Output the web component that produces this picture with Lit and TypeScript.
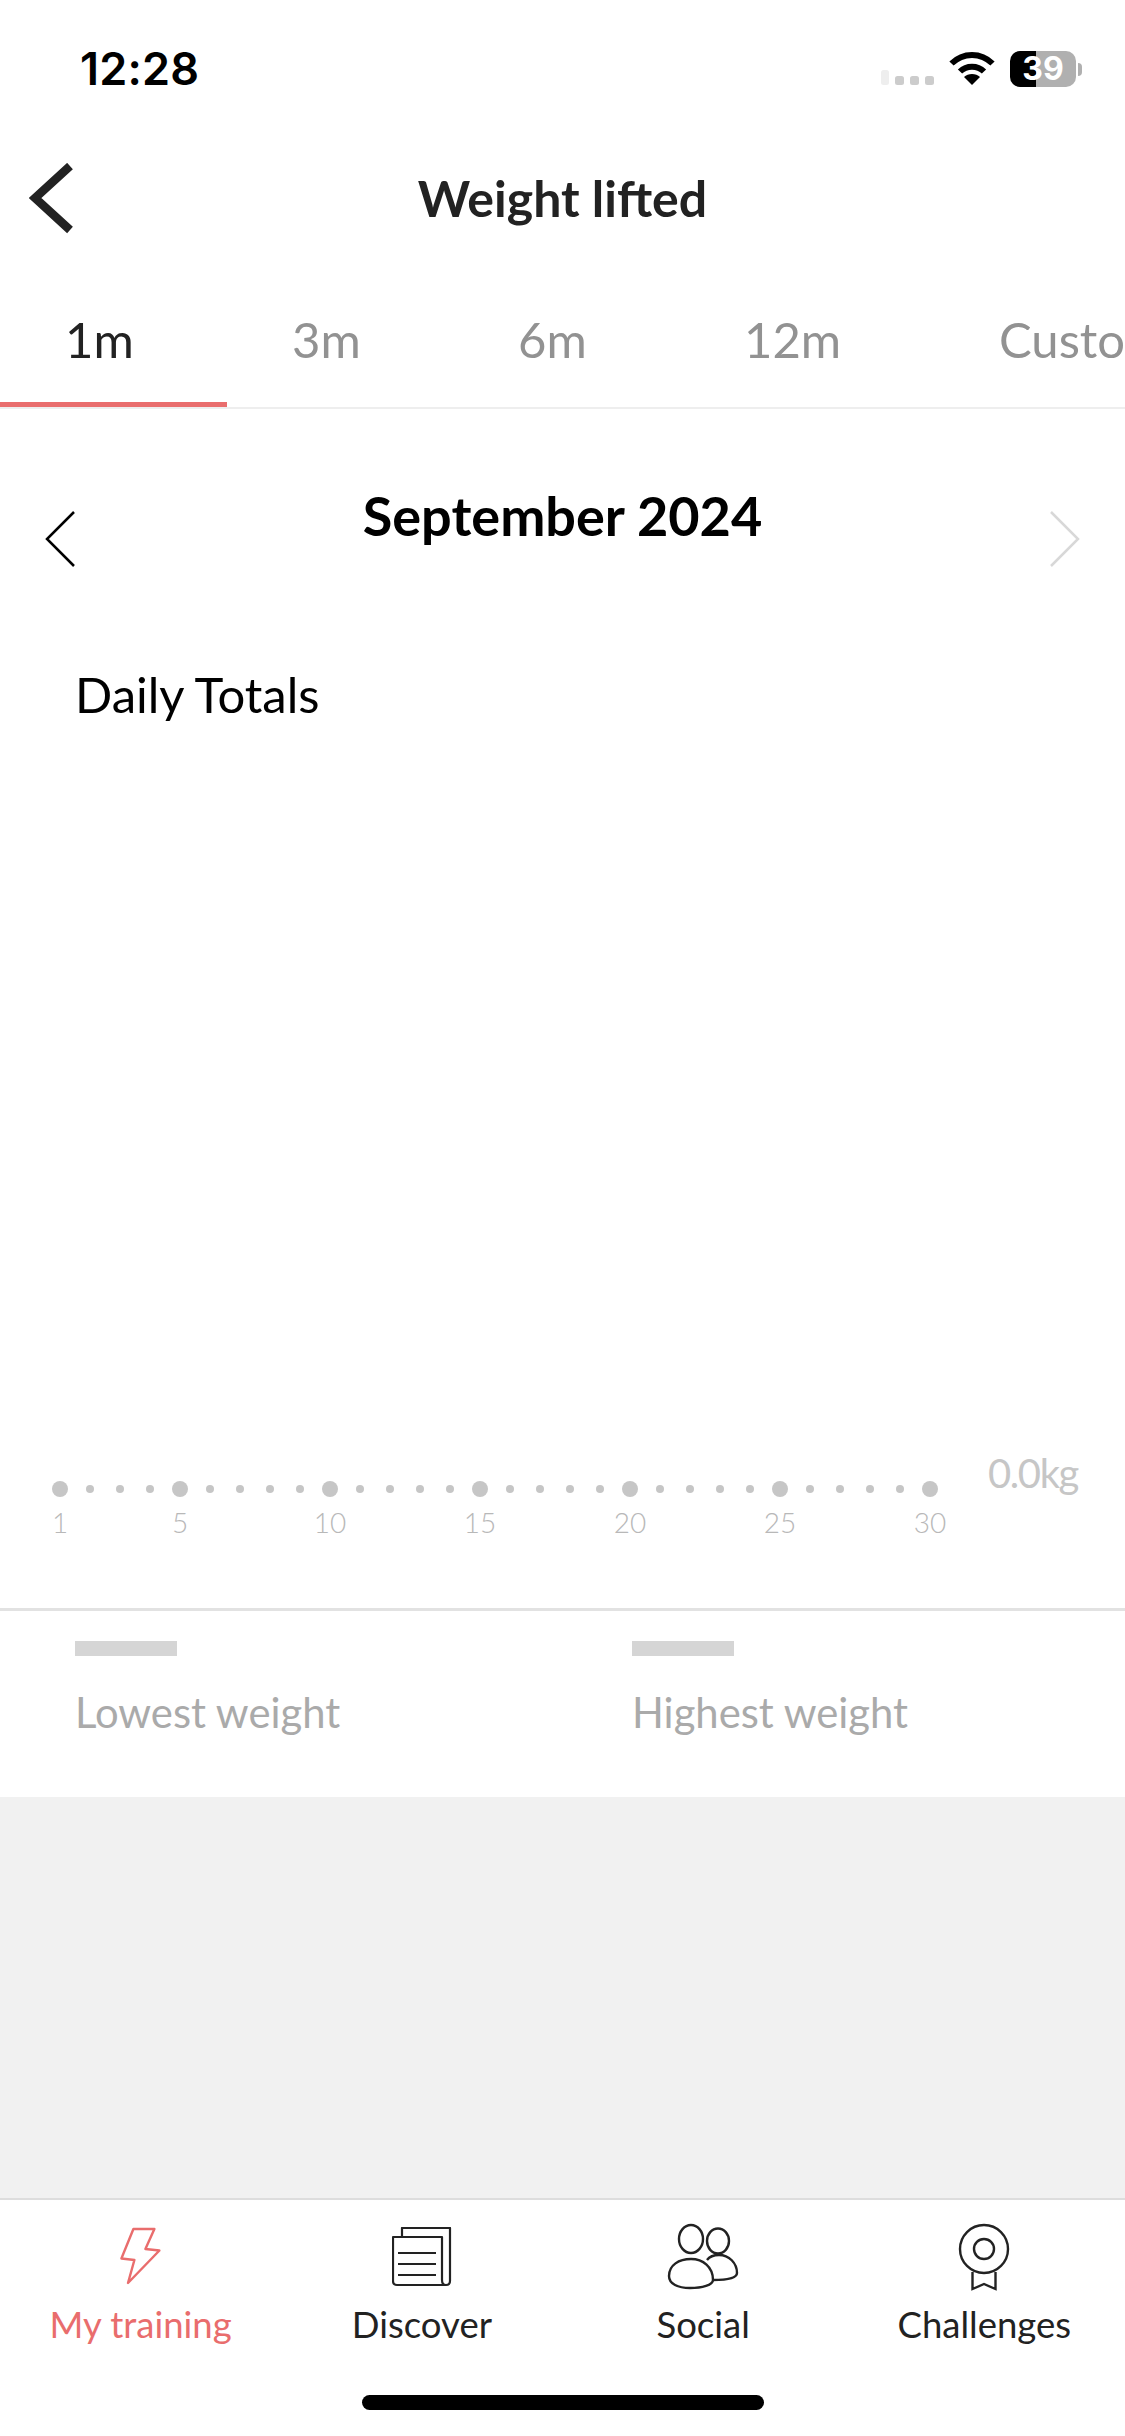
import { LitElement, html, css, svg } from "lit";
import { customElement } from "lit/decorators.js";

const TABS = [
  { label: "1m", width: 227, active: true },
  { label: "3m", width: 226 },
  { label: "6m", width: 226 },
  { label: "12m", width: 229 },
  { label: "Custom", width: 340, last: true },
];

const NAV = [
  { label: "My training", active: true, icon: svg`<svg width="60" height="60" viewBox="0 0 60 60" fill="none" stroke="currentColor" stroke-width="2.4" stroke-linejoin="round"><path d="M22.400 2H43.400L34.400 22L48.400 23.500L17 56L23.400 33L10.400 31.500Z"/></svg>` },
  { label: "Discover", icon: svg`<svg width="60" height="60" viewBox="0 0 60 60" fill="none" stroke="#222" stroke-width="2.200" stroke-linejoin="round"><path d="M10 9V1H58V54Q58 58 54 58H5Q1 58 1 54V10H50V53Q50 58 54 58"/><path d="M6 26H44M6 37H44M6 48H44"/></svg>` },
  { label: "Social", icon: svg`<svg width="74" height="68" viewBox="0 0 74 68" fill="none" stroke="#222" stroke-width="2.400"><ellipse cx="25" cy="16" rx="12" ry="14"/><ellipse cx="52" cy="18" rx="11" ry="12.500"/><path d="M3 53C3 42 13 36 25 36C37 36 47 44 47 57C47 62 36 65 24 65C12 65 3 61 3 53Z"/><path d="M41 37C44 33 48 32 53 32C63 32 71 40 71 50C71 55 61 57 47 57"/></svg>` },
  { label: "Challenges", icon: svg`<svg width="56" height="70" viewBox="0 0 56 70" fill="none" stroke="#222" stroke-width="2.400"><circle cx="28" cy="27" r="24"/><circle cx="28" cy="27" r="10"/><path d="M16.500 50V67L28 62L39.500 67V50"/></svg>` },
];

const days = Array.from({ length: 30 }, (_, i) => i + 1);
const isMajor = (d: number) => d === 1 || d % 5 === 0;

@customElement("app-root")
export class AppRoot extends LitElement {
  static styles = css`
    :host { display: block; width: 1125px; height: 2436px; background: #fff; font-family: Lato, "Liberation Sans", sans-serif; overflow: hidden; }
    .page { display: flex; flex-direction: column; height: 2436px; }
    .status { height: 130px; flex: none; display: flex; padding: 46px 43px 0 80px; box-sizing: border-box; justify-content: space-between; align-items: flex-start; }
    .time { font: 600 45px/46px Inter, "Liberation Sans", sans-serif; color: #000; letter-spacing: 0.2px; }
    .status-icons { display: flex; align-items: flex-start; margin-top: 5px; }
    .cell { display: flex; align-items: flex-end; gap: 6px; height: 34px; margin-right: 15px; }
    .cell i { display: block; width: 9px; height: 9px; border-radius: 2.500px; background: #ccc; }
    .cell i:first-child { height: 15px; width: 8px; background: #eee; }
    .wifi { margin-right: 15px; display: block; }
    .battery { position: relative; width: 66px; height: 36px; border-radius: 10px; background: linear-gradient(90deg, #000 0 26px, #b0b0b0 26px); color: #fff; font: 700 32px/36px Inter, "Liberation Sans", sans-serif; text-align: center; }
    .cap { width: 4px; height: 13px; margin: 12px 0 0 2px; background: #b0b0b0; border-radius: 0 4px 4px 0; }
    .nav { height: 132px; flex: none; position: relative; display: flex; align-items: center; justify-content: center; }
    .title { font-size: 50px; font-weight: 700; color: #222; line-height: 58px; margin-top: 3px; }
    .back { position: absolute; left: 29px; top: 33px; display: block; }
    .tabs { height: 147px; flex: none; box-sizing: border-box; border-bottom: 2px solid #eee; display: flex; overflow: hidden; }
    .tab { flex: none; box-sizing: border-box; height: 145px; font-size: 49px; line-height: 56px; padding: 49px 0 0 65px; color: #929292; white-space: nowrap; }
    .tab.active { color: #222; border-bottom: 5px solid #e96d6d; }
    .tab.last { padding-left: 91px; }
    .month { height: 253px; flex: none; position: relative; display: flex; justify-content: space-between; align-items: flex-start; padding: 101px 44px 0 44px; box-sizing: border-box; }
    .month-name { position: absolute; left: 0; right: 0; top: 72px; text-align: center; font-size: 54px; font-weight: 700; line-height: 70px; color: #000; }
    .daily { flex: none; padding-left: 75px; font-size: 49px; line-height: 64px; height: 64px; color: #000; }
    .chart-space { height: 731px; flex: none; }
    .chart-row { flex: none; display: flex; align-items: flex-start; padding-left: 45px; height: 151px; box-sizing: border-box; }
    .axis { display: grid; grid-template-columns: repeat(30, 30px); margin-top: 24px; }
    .day { display: flex; flex-direction: column; align-items: center; }
    .dot-box { height: 16px; display: flex; align-items: center; justify-content: center; margin-bottom: 13px; }
    .dot { width: 8px; height: 8px; border-radius: 50%; background: #c6c6c6; }
    .dot.major { width: 16px; height: 16px; }
    .tick { width: 60px; flex: none; margin: 0 -15px; height: 24px; text-align: center; font-size: 28px; line-height: 24px; font-weight: 300; color: #b8b8b8; }
    .kg { margin-left: 43px; font-size: 40px; line-height: 40px; font-weight: 400; color: #c6c6c6; margin-top: -4px; letter-spacing: -1.400px; }
    .rule { height: 3px; flex: none; background: #e2e2e2; }
    .stats { flex: none; height: 186px; display: grid; grid-template-columns: 557px 1fr; padding: 30px 0 0 75px; box-sizing: border-box; }
    .placeholder { width: 102px; height: 15px; background: #d5d5d5; }
    .stat-label { margin-top: 27px; font-size: 41.800px; line-height: 58px; font-weight: 400; color: #aaa; }
    .fill { flex: 1; background: #f1f1f1; }
    .tabbar { flex: none; height: 238px; border-top: 2px solid #ddd; background: #fff; box-sizing: border-box; display: flex; flex-direction: column; }
    .items { display: grid; grid-template-columns: repeat(4, 1fr); height: 195px; }
    .item { display: flex; flex-direction: column; align-items: center; color: #222; font-size: 36.500px; }
    .item.active { color: #e96d6d; }
    .icon { height: 72px; margin-top: 21px; display: flex; align-items: center; justify-content: center; }
    .item-label { margin-top: 8px; line-height: 46px; }
    .home { width: 402px; height: 15px; border-radius: 8px; background: #000; align-self: center; }
  `;

  render() {
    return html`<div class="page">
      <div class="status">
        <span class="time">12:28</span>
        <div class="status-icons">
          <div class="cell"><i></i><i></i><i></i><i></i></div>
          <svg class="wifi" width="46" height="34" viewBox="0 0 46 34" fill="none" stroke="#000" stroke-width="6"><path d="M2.500 12.500C14 1 32 1 43.500 12.500"/><path d="M11 20.500C17.500 14 28.500 14 35 20.500"/><path d="M23 34L15 26C19 22 27 22 31 26Z" fill="#000" stroke="none"/></svg>
          <div class="battery">39</div>
          <div class="cap"></div>
        </div>
      </div>
      <div class="nav">
        <svg class="back" width="46" height="72" viewBox="0 0 46 72" fill="none" stroke="#222" stroke-width="8.500"><path d="M41 3L6 35L41 67"/></svg>
        <span class="title">Weight lifted</span>
      </div>
      <div class="tabs">
        ${TABS.map(t => html`<div class="tab ${t.active ? "active" : ""} ${t.last ? "last" : ""}" style="width:${t.width}px">${t.label}</div>`)}
      </div>
      <div class="month">
        <span class="month-name">September 2024</span>
        <svg width="32" height="58" viewBox="0 0 32 58" fill="none" stroke="#000" stroke-width="2.500"><path d="M30 2L3 29L30 56"/></svg>
        <svg width="32" height="58" viewBox="0 0 32 58" fill="none" stroke="#d8d8d8" stroke-width="2.500"><path d="M2 2L29 29L2 56"/></svg>
      </div>
      <div class="daily">Daily Totals</div>
      <div class="chart-space"></div>
      <div class="chart-row">
        <div class="axis">
          ${days.map(d => html`<div class="day">
            <div class="dot-box"><div class="dot ${isMajor(d) ? "major" : ""}"></div></div>
            ${isMajor(d) ? html`<div class="tick">${d}</div>` : ""}
          </div>`)}
        </div>
        <div class="kg">0.0kg</div>
      </div>
      <div class="rule"></div>
      <div class="stats">
        <div><div class="placeholder"></div><div class="stat-label">Lowest weight</div></div>
        <div><div class="placeholder"></div><div class="stat-label">Highest weight</div></div>
      </div>
      <div class="fill"></div>
      <div class="tabbar">
        <div class="items">
          ${NAV.map(n => html`<div class="item ${n.active ? "active" : ""}"><div class="icon">${n.icon}</div><div class="item-label">${n.label}</div></div>`)}
        </div>
        <div class="home"></div>
      </div>
    </div>`;
  }
}
